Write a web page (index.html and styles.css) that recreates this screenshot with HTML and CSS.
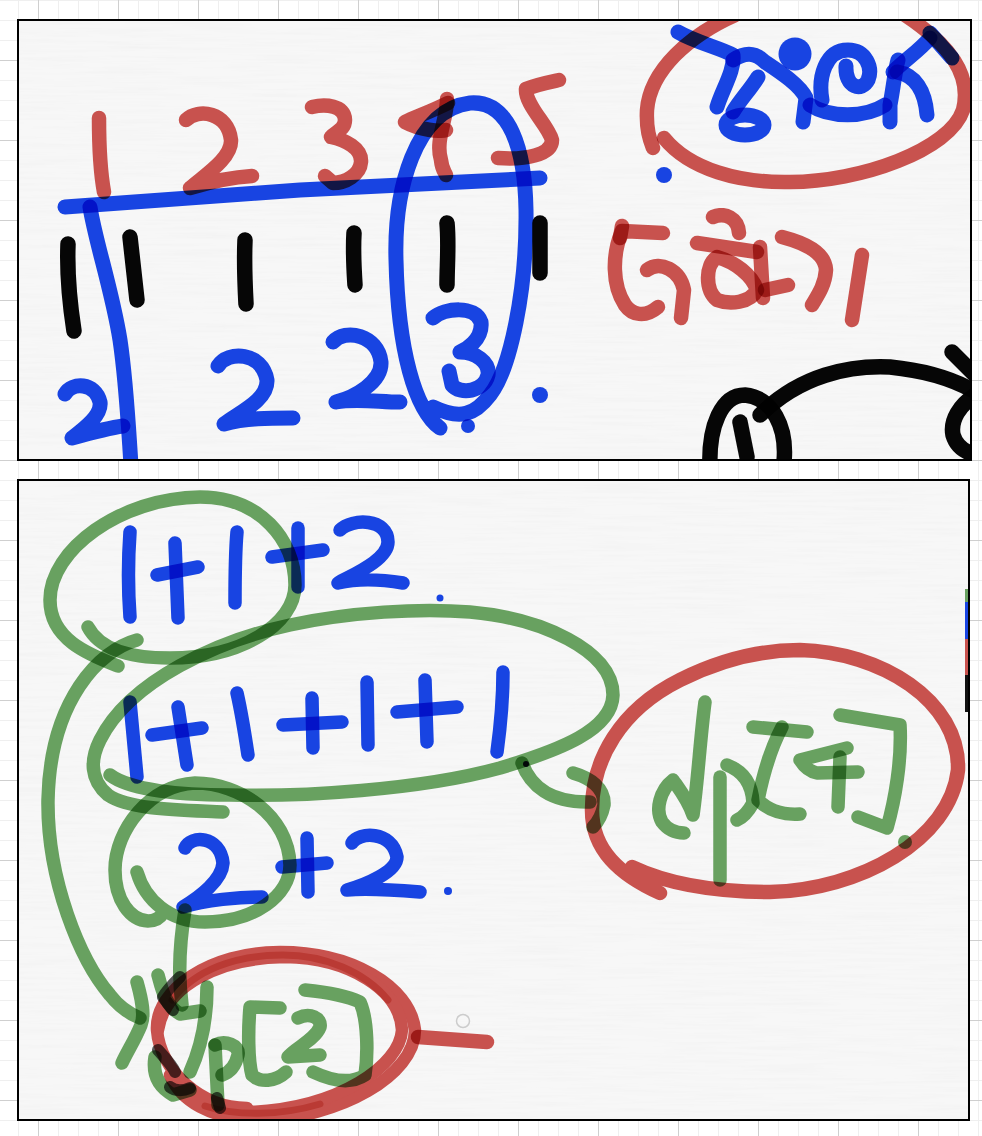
FILE: index.html
```html
<!DOCTYPE html>
<html lang="ko">
<head>
<meta charset="utf-8">
<title>DP whiteboard notes</title>
<link rel="stylesheet" href="styles.css">
</head>
<body>
<main class="notes">
  <section class="sheet sheet-top">
    <svg class="canvas" viewBox="19 21 951 438" width="951" height="438" aria-label="Handwritten table of values">
      <defs>
        <filter id="grain" x="0" y="0" width="100%" height="100%">
          <feTurbulence type="fractalNoise" baseFrequency="0.012 0.32" numOctaves="3" seed="4"/>
          <feColorMatrix type="matrix" values="0 0 0 0 0.4  0 0 0 0 0.4  0 0 0 0 0.4  0.1 0 0 0 -0.04"/>
        </filter>
      </defs>
      <rect class="paper" x="19" y="21" width="951" height="438" filter="url(#grain)"/>
      <g class="ink">
        <g class="red">
          <path d="M99 118C99 145 100 170 104 192"/>
          <path d="M186 120C198 108 228 112 231 140C232 158 205 175 190 188C210 182 235 177 252 176"/>
          <path d="M312 107C325 104 345 105 345 120C345 130 335 132 331 137C345 140 362 148 361 162C360 175 345 183 333 183L325 176"/>
          <path d="M448 103C430 112 415 117 405 122C420 130 440 132 446 130"/>
          <path d="M447 99C447 120 435 140 441 160C442 170 445 172 446 175"/>
          <path d="M559 80C545 83 535 85 526 89C525 105 548 125 552 140C552 155 525 160 498 158"/>
          <path d="M735 15C690 35 650 70 647 110C646 130 650 140 653 148"/>
          <path d="M664 138C690 170 740 183 790 182C860 182 950 150 963 110C972 75 950 45 905 15"/>
          <path d="M663 233L622 231C612 255 612 285 625 305C632 315 645 318 658 307"/>
          <path d="M622 226L620 238"/>
          <path d="M647 270C660 260 680 270 684 290L681 318"/>
          <path d="M713 217C725 212 738 218 739 233"/>
          <path d="M697 243L757 252"/>
          <path d="M717 257C705 265 705 290 717 300C730 305 750 303 757 290C752 275 735 262 717 257Z"/>
          <path d="M760 247L763 298"/>
          <path d="M765 290L788 285"/>
          <path d="M782 237C805 243 825 252 826 270C825 285 818 295 812 305"/>
          <path d="M862 255L852 320"/>
        </g>
        <g class="blue">
          <path d="M65 207L300 190L540 178"/>
          <path d="M90 207C95 240 112 290 120 340C126 380 128 420 131 465"/>
          <path d="M440 428C415 410 398 350 396 260C394 190 415 110 470 103C510 100 525 150 526 210C527 290 510 370 490 395C475 415 460 420 433 407"/>
          <path d="M433 318C445 308 475 305 481 322C483 340 465 350 460 352C475 352 490 362 488 375C484 392 460 395 452 385L449 371"/>
          <path d="M65 394C72 382 95 382 100 402C102 415 85 428 72 438C90 433 108 428 123 426"/>
          <path d="M218 366C228 350 262 352 267 380C268 400 240 412 224 424C245 418 270 418 293 418"/>
          <path d="M333 342C345 328 378 335 381 362C382 382 355 397 336 402C355 398 380 402 400 402"/>
          <circle cx="468" cy="426" r="7"/>
          <circle cx="540" cy="395" r="8"/>
          <circle cx="664" cy="175" r="8"/>
          <path d="M678 32C695 42 720 48 733 55C735 70 722 90 717 107"/>
          <path d="M733 60C745 52 755 52 765 62C780 72 800 85 806 98L803 122"/>
          <path d="M758 77C750 90 740 100 733 112"/>
          <ellipse cx="745" cy="125" rx="19" ry="10"/>
          <circle cx="795" cy="54" r="16.5"/>
          <path d="M822 100C818 78 825 50 848 50C866 50 873 68 868 80C862 92 845 88 846 66"/>
          <path d="M810 105C830 118 865 118 885 105"/>
          <path d="M930 38C920 50 905 60 893 72"/>
          <path d="M898 60C895 70 893 90 890 105L890 122"/>
          <path d="M897 72C915 75 925 90 927 115"/>
          <path d="M930 33L952 58"/>
        </g>
        <g class="black">
          <path d="M68 244C67 270 70 305 74 331"/>
          <path d="M130 237L137 300"/>
          <path d="M245 240C244 262 245 285 246 304"/>
          <path d="M354 233C353 250 354 270 355 285"/>
          <path d="M447 223C449 245 447 265 447 285"/>
          <path d="M540 223L540 273"/>
          <path d="M710 470C708 425 722 395 745 395C770 397 790 425 783 470"/>
          <path d="M760 415C800 375 850 365 890 367C920 370 950 378 972 390"/>
          <path d="M740 422L747 457"/>
          <path d="M952 352L975 375"/>
          <path d="M975 395C960 405 950 420 953 435C956 445 962 450 970 453"/>
        </g>
      </g>
    </svg>
  </section>

  <section class="sheet sheet-bottom">
    <svg class="canvas" viewBox="19 481 949 638" width="949" height="638" aria-label="Handwritten sums with dp[2] and dp[4]">
      <rect class="paper" x="19" y="481" width="949" height="638" filter="url(#grain)"/>
      <g class="ink">
        <g class="green">
          <path d="M118 666C90 655 50 640 50 600C50 550 120 498 200 497C260 497 295 540 295 585C295 625 240 658 170 658C130 658 100 650 88 627"/>
          <path d="M137 640C100 650 50 700 48 800C47 880 80 960 110 995C120 1008 130 1014 140 1018"/>
          <path d="M223 812C180 810 130 810 108 795C90 780 90 760 100 740C130 680 220 640 290 625C350 612 420 608 470 612C540 618 613 650 613 695C612 730 560 750 500 768C420 790 300 797 230 795C180 795 130 790 110 775"/>
          <path d="M137 872C145 900 170 922 205 922C255 922 290 895 290 865C288 815 240 783 195 783C150 785 115 830 115 870C115 900 130 920 148 921C155 921 160 918 163 913"/>
          <path d="M185 910C180 940 178 975 182 1005"/>
          <path d="M137 982C142 1000 145 1015 141 1025C135 1040 128 1050 122 1063"/>
          <path d="M158 975C162 990 165 1005 180 1014L200 1011"/>
          <path d="M207 987C207 1020 200 1050 190 1072"/>
          <path d="M155 1057C153 1070 155 1085 173 1095L190 1090"/>
          <path d="M215 1045L218 1105"/>
          <path d="M215 1045C225 1040 240 1045 238 1055C235 1068 228 1073 222 1075"/>
          <path d="M280 1008L250 1007C248 1030 248 1060 252 1075C260 1083 275 1082 286 1072"/>
          <path d="M298 1018C310 1012 322 1018 320 1027C315 1040 295 1048 288 1057L320 1055"/>
          <path d="M305 990C325 992 345 995 360 1002C368 1020 368 1055 365 1075C350 1085 330 1080 313 1072"/>
          <path d="M522 763C530 785 550 803 590 802"/>
          <path d="M573 773C590 778 605 788 604 805C602 815 598 822 593 827"/>
          <path d="M705 702C700 740 698 780 693 815C688 800 680 790 673 780C660 790 655 810 662 822C668 830 675 833 684 833"/>
          <path d="M720 777L720 880"/>
          <path d="M727 765C740 770 752 780 753 803C748 812 742 818 737 820"/>
          <path d="M753 727L807 732"/>
          <path d="M782 727C770 750 762 780 758 800C770 812 785 815 800 814"/>
          <path d="M847 748L800 760C805 768 812 772 817 773L858 772"/>
          <path d="M840 757L838 807"/>
          <path d="M840 715L900 725C902 760 895 800 887 828L858 817"/>
          <circle cx="905" cy="842" r="7"/>
        </g>
        <g class="red">
          <path d="M660 893C620 875 592 850 592 810C592 760 620 710 680 680C720 660 760 650 800 650C880 652 960 700 958 770C950 840 860 890 770 892C720 892 670 885 632 867"/>
          <path d="M418 1037L487 1042"/>
        </g>
        <g class="red-loop">
          <path d="M247 1108C200 1108 160 1070 157 1030C155 990 210 952 280 952C350 952 410 985 415 1030C415 1075 340 1118 260 1120C210 1120 180 1100 170 1075"/>
          <path d="M158 1030C165 985 220 958 285 957C350 958 400 990 402 1030C400 1065 340 1108 250 1112"/>
          <path class="overlap" d="M172 1000C195 970 235 955 283 955C325 955 365 972 388 1000"/>
          <path class="overlap" d="M205 1106C235 1116 280 1116 320 1104"/>
        </g>
        <g class="shade">
          <path d="M158 1050C165 1058 172 1065 175 1072"/>
          <path d="M170 1087C175 1091 183 1091 190 1088"/>
          <path d="M217 1098L220 1108"/>
          <path d="M180 977C172 985 166 992 163 997L173 1010"/>
        </g>
        <g class="blue">
          <path d="M130 532C128 560 128 590 130 617"/>
          <path d="M175 543L178 618"/>
          <path d="M157 575L198 567"/>
          <path d="M237 532C235 555 235 580 235 603"/>
          <path d="M298 528L298 587"/>
          <path d="M272 557L323 550"/>
          <path d="M340 530C352 518 388 518 388 542C388 560 352 575 338 583C360 578 385 580 403 583"/>
          <circle cx="440" cy="598" r="3.5"/>
          <path d="M130 702L137 777"/>
          <path d="M178 707L187 765"/>
          <path d="M152 735L202 728"/>
          <path d="M237 693C242 715 245 735 248 755"/>
          <path d="M312 698L313 748"/>
          <path d="M283 725L342 722"/>
          <path d="M367 682L368 745"/>
          <path d="M425 680L427 742"/>
          <path d="M397 712L457 707"/>
          <path d="M503 672C503 700 500 730 497 752"/>
          <path d="M185 848C190 835 220 835 223 863C222 880 200 897 183 907C205 900 240 897 262 897"/>
          <path d="M307 838L308 892"/>
          <path d="M282 867L327 863"/>
          <path d="M352 843C358 832 392 830 397 857C397 872 365 885 347 890C370 888 395 890 420 892"/>
          <circle cx="448" cy="891" r="4"/>
        </g>
        <circle class="pin" cx="526" cy="764" r="3"/>
      </g>
      <circle class="cursor" cx="463" cy="1021" r="6.5"/>
      <g class="palette">
        <rect class="swatch-green" x="965" y="589" width="3" height="13"/>
        <rect class="swatch-blue" x="965" y="602" width="3" height="37"/>
        <rect class="swatch-red" x="965" y="639" width="3" height="36"/>
        <rect class="swatch-black" x="965" y="675" width="3" height="37"/>
      </g>
    </svg>
  </section>
</main>
</body>
</html>
```
FILE: styles.css
```css
html, body {
  margin: 0;
  padding: 0;
}

body {
  box-sizing: border-box;
  min-height: 1136px;
  background-color: #ffffff;
  background-image:
    linear-gradient(#cfcfcf 1px, transparent 1px),
    linear-gradient(90deg, #cfcfcf 1px, transparent 1px),
    linear-gradient(#efefef 1px, transparent 1px),
    linear-gradient(90deg, #efefef 1px, transparent 1px);
  background-size: 80px 80px, 80px 80px, 20px 20px, 20px 20px;
  background-position: 0 60px, 38px 0, 0 0, 18px 0;
}

.notes {
  display: flex;
  flex-direction: column;
  align-items: flex-start;
  gap: 18px;
  padding: 19px 0 0 17px;
}

.sheet {
  border: 2px solid #000000;
  background: #f7f7f7;
  overflow: hidden;
}

.canvas {
  display: block;
}

.paper {
  fill: #808080;
}

.ink {
  filter: blur(0.6px);
}

.ink path,
.ink ellipse {
  fill: none;
  stroke-linecap: round;
  stroke-linejoin: round;
  mix-blend-mode: multiply;
}

.ink circle {
  mix-blend-mode: multiply;
}

.red path { stroke: #c8524e; stroke-width: 14.5px; }
.blue path, .blue ellipse { stroke: #1844e2; stroke-width: 15px; }
.sheet-bottom .blue path { stroke-width: 13.5px; }
.green path { stroke: #68a160; stroke-width: 13.5px; }
.black path { stroke: #060606; stroke-width: 15.5px; }

.blue circle { fill: #1844e2; }
.green circle { fill: #68a160; }

.red-loop { mix-blend-mode: multiply; }
.red-loop path {
  stroke: #c8524e;
  stroke-width: 12.5px;
  mix-blend-mode: normal;
}
.red-loop .overlap {
  stroke: #eeb5a8;
  stroke-width: 7px;
  mix-blend-mode: multiply;
}

.shade path {
  stroke: #5a5a5a;
  stroke-width: 12px;
}

.pin { fill: #0a1230; }

.cursor {
  fill: none;
  stroke: #cccccc;
  stroke-width: 1.5px;
}

.swatch-green { fill: #68a160; }
.swatch-blue { fill: #1844e2; }
.swatch-red { fill: #c8524e; }
.swatch-black { fill: #111111; }
```
